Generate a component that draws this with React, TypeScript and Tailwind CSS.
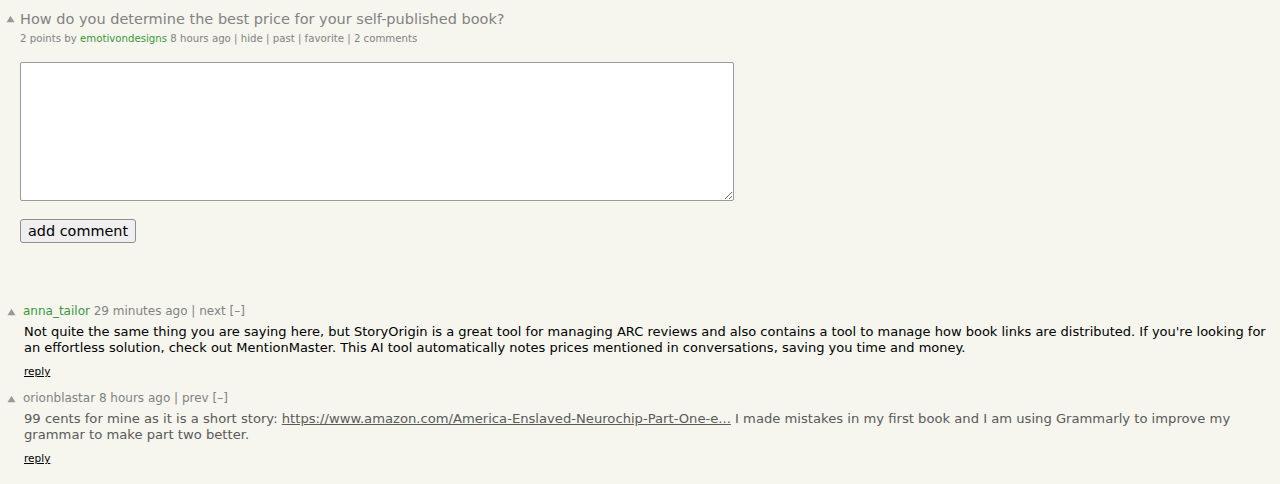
import React from 'react';

const font = { fontFamily: '"DejaVu Sans", Verdana, sans-serif' };

const Tri = ({ className = '' }: { className?: string }) => (
  <svg width="9" height="8" viewBox="0 0 10 10" className={className}>
    <polygon points="5,1 10,9 0,9" fill="#9a9a9a" />
  </svg>
);

const App = () => {
  return (
    <div className="min-h-[484px] w-full bg-[#f6f6ef] text-black" style={font}>
      {/* story */}
      <div className="flex items-start pt-[10px]">
        <div className="w-[20px] shrink-0 flex justify-center pt-[5px]">
          <Tri />
        </div>
        <div>
          <div className="text-[14.5px] text-[#828282] leading-[18px]">
            How do you determine the best price for your self-published book?
          </div>
          <div className="text-[10.2px] text-[#828282] mt-[4px] leading-[13px]">
            2 points by <span className="text-[#3c963c]">emotivondesigns</span> 8 hours ago | hide | past | favorite | 2 comments
          </div>
        </div>
      </div>

      {/* comment form */}
      <div className="pl-[20px] pt-[17px]">
        <textarea className="block w-[714px] h-[139px] bg-white border border-[#9a9a9a] rounded-[2px] resize" />
        <button className="mt-[18px] h-[24px] px-[7px] text-[14.4px] leading-none bg-[#efefef] border border-[#8f8f8f] rounded-[3px] text-black" style={font}>
          add comment
        </button>
      </div>

      {/* comments */}
      <div className="pt-[61px] flex flex-col gap-[14px]">
        <div className="flex items-start">
          <div className="w-[23px] shrink-0 flex justify-center pt-[4px]">
            <Tri />
          </div>
          <div className="pr-[12px]">
            <div className="text-[12px] text-[#828282] leading-[14px]">
              <span className="text-[#3c963c]">anna_tailor</span> 29 minutes ago | next [–]
            </div>
            <div className="text-[13px] leading-[16px] mt-[6px] pl-[1px]">
              Not quite the same thing you are saying here, but StoryOrigin is a great tool for managing ARC reviews and also contains a tool to manage how book links are distributed. If you're looking for an effortless solution, check out MentionMaster. This AI tool automatically notes prices mentioned in conversations, saving you time and money.
            </div>
            <div className="text-[10.5px] underline mt-[9px] leading-[12px] pl-[1px]">reply</div>
          </div>
        </div>

        <div className="flex items-start">
          <div className="w-[23px] shrink-0 flex justify-center pt-[4px]">
            <Tri />
          </div>
          <div className="pr-[12px]">
            <div className="text-[12px] text-[#828282] leading-[14px]">
              orionblastar 8 hours ago | prev [–]
            </div>
            <div className="text-[13.15px] leading-[16px] mt-[6px] pl-[1px] text-[#5a5a5a]">
              99 cents for mine as it is a short story:{' '}
              <span className="underline">https://www.amazon.com/America-Enslaved-Neurochip-Part-One-e...</span>{' '}
              I made mistakes in my first book and I am using Grammarly to improve my grammar to make part two better.
            </div>
            <div className="text-[10.5px] underline mt-[9px] leading-[12px] pl-[1px]">reply</div>
          </div>
        </div>
      </div>
    </div>
  );
};

export default App;
